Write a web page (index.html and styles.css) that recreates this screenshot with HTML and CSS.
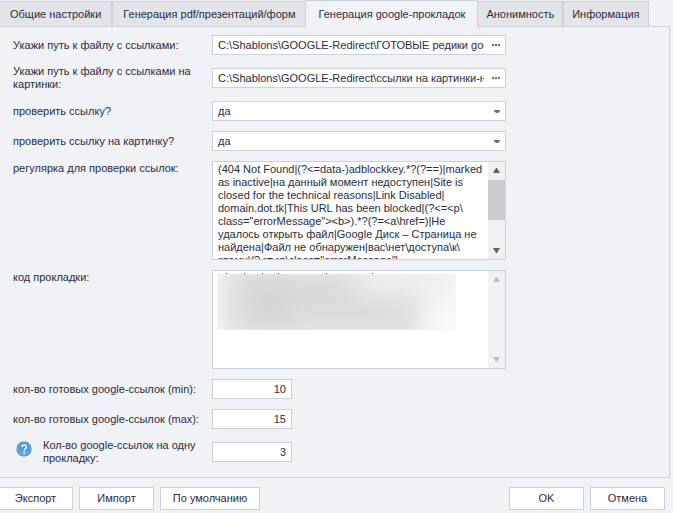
FILE: index.html
```html
<!DOCTYPE html>
<html lang="ru">
<head>
<meta charset="utf-8">
<title>Настройки</title>
<link rel="stylesheet" href="styles.css">
</head>

<body>
<nav class="tabs">
	<a href="#common">Общие настройки</a>
	<a href="#pdf">Генерация pdf/презентаций/форм</a>
	<a href="#google" class="active">Генерация google-прокладок</a>
	<a href="#anon">Анонимность</a>
	<a href="#info">Информация</a>
</nav>
<form class="page">
	<div class="pane">
		<label for="links">Укажи путь к файлу с ссылками:</label>
		<div class="box">
			<input type="text" id="links" value="C:\Shablons\GOOGLE-Redirect\ГОТОВЫЕ редики google.txt">
			<button type="button" class="browse" aria-label="Обзор"><svg width="9" height="2"><path d="M0 0h2v2H0zM3 0h2v2H3zM6 0h2v2H6z"/></svg></button>
		</div>

		<label for="pics">Укажи путь к файлу с ссылками на картинки:</label>
		<div class="box">
			<input type="text" id="pics" value="C:\Shablons\GOOGLE-Redirect\ссылки на картинки-новые.txt">
			<button type="button" class="browse" aria-label="Обзор"><svg width="9" height="2"><path d="M0 0h2v2H0zM3 0h2v2H3zM6 0h2v2H6z"/></svg></button>
		</div>

		<label for="checkLink">проверить ссылку?</label>
		<div class="box drop">
			<select id="checkLink"><option>да</option><option>нет</option></select>
			<svg width="7" height="4"><path d="M0 0h6v1L4 3H2L0 1z"/></svg>
		</div>

		<label for="checkPic">проверить ссылку на картинку?</label>
		<div class="box drop">
			<select id="checkPic"><option>да</option><option>нет</option></select>
			<svg width="7" height="4"><path d="M0 0h6v1L4 3H2L0 1z"/></svg>
		</div>

		<label for="regexp" class="top">регулярка для проверки ссылок:</label>
		<div class="box area">
			<textarea id="regexp" wrap="off" spellcheck="false">(404 Not Found|(?&lt;=data-)adblockkey.*?(?==)|marked
as inactive|на данный момент недоступен|Site is
closed for the technical reasons|Link Disabled|
domain.dot.tk|This URL has been blocked|(?&lt;=&lt;p\
class="errorMessage"&gt;&lt;b&gt;).*?(?=&lt;a\href=)|Не
удалось открыть файл|Google Диск – Страница не
найдена|Файл не обнаружен|вас\нет\доступа\к\
этому|(?&lt;=&lt;p\class="errorMessage"\</textarea>
			<div class="scroll">
				<svg width="7" height="5"><path d="M3 0h1l3 5H0z"/></svg>
				<div class="thumb"></div>
				<svg width="7" height="5"><path d="M0 0h7L4 5H3z"/></svg>
			</div>
		</div>

		<label for="code" class="top">код прокладки:</label>
		<div class="box area">
			<textarea id="code" spellcheck="false"></textarea>
			<svg class="smear" width="239" height="57" viewBox="0 0 239 57">
				<defs>
					<filter id="soft" x="-20%" y="-40%" width="140%" height="180%"><feGaussianBlur stdDeviation="12"/></filter>
					<clipPath id="cut"><path d="M0 1h239v56H0z"/></clipPath>
				</defs>
				<path fill="#4a5070" d="M9 0h1v1H9zM27 0h1v1h-1zM45 0h1v1h-1zM61 0h1v1h-1zM109 0h1v1h-1zM155 0h1v1h-1z"/>
				<g clip-path="url(#cut)">
					<path fill="#f8f9f9" d="M0 1h239v56H0z"/>
					<g filter="url(#soft)">
						<path fill="#e2e3e4" d="M4-10h200v78H4z"/>
						<path fill="#eceeef" d="M140-10h99v32h-99z"/>
						<path fill="#dadbdd" d="M14 0h126v24h62v30H14z"/>
						<path fill="#d4d5d7" d="M34 0h40v57H34z"/>
					</g>
				</g>
			</svg>
			<div class="scroll off">
				<svg width="7" height="5"><path d="M3 0h1l3 5H0z"/></svg>
				<svg width="7" height="5"><path d="M0 0h7L4 5H3z"/></svg>
			</div>
		</div>

		<label for="min">кол-во готовых google-ссылок (min):</label>
		<div class="box num"><input type="text" id="min" value="10"></div>

		<label for="max">кол-во готовых google-ссылок (max):</label>
		<div class="box num"><input type="text" id="max" value="15"></div>

		<div class="help">
			<svg width="16" height="16" viewBox="0 0 16 16">
				<defs><linearGradient id="ball" x1="0" y1="0" x2="0" y2="1"><stop offset="0" stop-color="#3f86cf"/><stop offset="1" stop-color="#5fb0ee"/></linearGradient></defs>
				<circle cx="8" cy="8" r="7.5" fill="#2c68ad"/>
				<circle cx="8" cy="8" r="6.3" fill="url(#ball)" stroke="#a9cdee" stroke-width=".8"/>
				<path d="M5.8 6.2c0-3 4.6-3 4.6-.3 0 1.7-2.2 1.7-2.2 3.5" fill="none" stroke="#fff" stroke-width="1.5"/>
				<path d="M7.4 10.6H9v1.600H7.4z" fill="#fff"/>
			</svg>
			<label for="one">Кол-во google-ссылок на одну прокладку:</label>
		</div>
		<div class="box num"><input type="text" id="one" value="3"></div>
	</div>
	<div class="foot">
		<button type="button">Экспорт</button>
		<button type="button">Импорт</button>
		<button type="button" class="wide">По умолчанию</button>
		<button type="submit" class="ok">OK</button>
		<button type="button">Отмена</button>
	</div>
</form>
</body>
</html>
```

FILE: styles.css
```css
*{margin:0;padding:0;box-sizing:border-box;}
body{background:#f1f2f6;color:#2b2d3c;}
body,input,select,textarea,button{
	font:11px/13px "Liberation Sans",Arial,sans-serif;
	color:#2b2d3c;
}
svg{display:block;}
.tabs{
	display:flex;
	align-items:flex-end;
	height:27px;
	margin-right:3px;
	border-bottom:1px solid #cdd1da;
}
.tabs a{
	height:25px;
	padding:6px 10px 0;
	border:1px solid #cdd1da;
	border-bottom:0;
	background:#e3e4e8;
	color:#2b2d3c;
	text-decoration:none;
	white-space:nowrap;
}
.tabs a:first-child{border-left:0;}
.tabs .active{
	height:27px;
	margin:0 -1px -1px;
	padding:7px 12px 0;
	background:#f1f2f6;
	position:relative;
}
.tabs .active ~ a{padding:6px 8px 0;}
.pane{
	display:grid;
	grid-template-columns:199px minmax(0,1fr);
	row-gap:10px;
	align-items:center;
	margin-right:3px;
	padding:8px 163px 12px 13px;
	border-right:1px solid #cdd1da;
	border-bottom:1px solid #cdd1da;
}
.pane .top{align-self:start;padding-top:1px;}
.box{
	display:flex;
	height:20px;
	border:1px solid #cdd1da;
	background:#fff;
	position:relative;
}
.box input,.box select,.box textarea{
	flex:1;
	min-width:0;
	border:0;
	outline:0;
	background:none;
}
.box input{margin-left:5px;}
.browse{
	width:21px;
	padding-left:8px;
	border:0;
	background:none;
	fill:#6b6f7a;
}
.drop select{
	appearance:none;
	padding:0 20px 0 5px;
}
.drop svg{
	position:absolute;
	right:4px;
	top:8px;
	fill:#6b6f7a;
	pointer-events:none;
}
.area{height:99px;}
.area textarea{
	padding:1px 0 0 5px;
	overflow:hidden;
	resize:none;
}
.scroll{
	display:flex;
	flex-direction:column;
	justify-content:space-between;
	align-items:center;
	width:17px;
	padding:6px 0;
	background:#f0f0f0;
	fill:#5f6368;
}
.thumb{
	width:17px;
	height:40px;
	margin:0 0 22px;
	background:#cdcdcd;
}
.off{background:#f1f2f6;fill:#bfc1c6;}
.smear{
	position:absolute;
	left:4px;
	top:2px;
	pointer-events:none;
}
.num{width:80px;}
.num input{padding-right:5px;text-align:right;}
.help{display:flex;gap:11px;padding-left:3px;}
.help svg{flex:none;margin-top:2px;}
.foot{
	display:flex;
	gap:6px;
	margin:9px 8px 0 -2px;
}
.foot button{
	min-width:75px;
	height:23px;
	border:1px solid #cdd1da;
	background:#fff;
}
.foot .wide{min-width:100px;}
.foot .ok{margin-left:auto;}
```
